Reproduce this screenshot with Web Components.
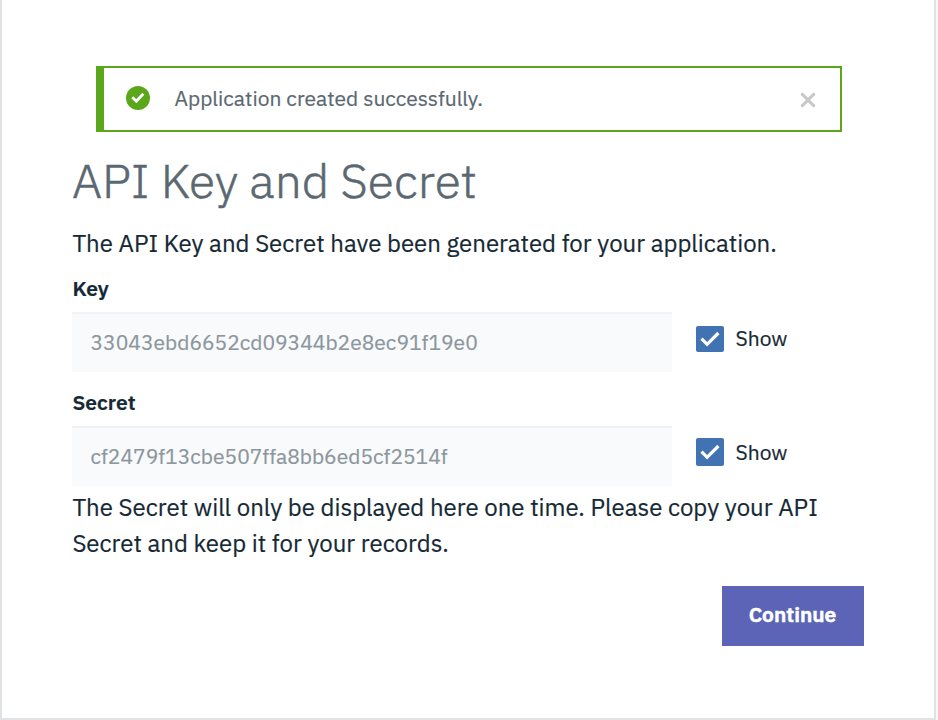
<!DOCTYPE html>
<html lang="en">
<head>
<meta charset="utf-8">
<title>API Key and Secret</title>
<style>
html,body{margin:0;height:100%;background:#f5f7fb}
body{font-family:"IBM Plex Sans",Roboto,"Noto Sans",sans-serif;color:#152935;-webkit-text-stroke:.2px currentColor}
</style>
</head>
<body>
<api-dialog>
  <success-notice slot="notice">Application created successfully.</success-notice>
  <span slot="title">API Key and Secret</span>
  <span slot="intro">The API Key and Secret have been generated for your application.</span>
  <secret-field slot="fields" label="Key" value="33043ebd6652cd09344b2e8ec91f19e0"></secret-field>
  <secret-field slot="fields" label="Secret" value="cf2479f13cbe507ffa8bb6ed5cf2514f" style="--box-height:28px;--check-top:12px;--text-shift:0px"></secret-field>
  <span slot="warning">The Secret will only be displayed here one time. Please copy your API</span>
  <span slot="warning-end">Secret and keep it for your records.</span>
  <primary-button slot="action">Continue</primary-button>
</api-dialog>
<script>
const define = (name, markup) => customElements.define(name, class extends HTMLElement {
  constructor() {
    super();
    this.attachShadow({mode: 'open'}).innerHTML = markup;
  }
  connectedCallback() {
    this.shadowRoot.querySelectorAll('[data-attr]').forEach(el => {
      el.textContent = this.getAttribute(el.dataset.attr);
    });
  }
});

define('success-notice', `
<style>
:host{display:flex;align-items:center;box-sizing:border-box;height:66px;border:2px solid #5aa71b;border-left-width:8px;padding:0 24px 0 22px;color:#5a6872;font-size:21px;line-height:30px}
.ok{width:24px;height:24px;margin:-2px 24.5px 0 0}
.text{flex:1;white-space:nowrap;margin-top:-2px}
button{display:block;border:0;padding:0;margin-top:2px;background:none;width:16px;height:16px}
svg{display:block}
</style>
<svg class="ok" viewBox="0 0 24 24"><circle cx="12" cy="12" r="12" fill="#5aa71b"/><path d="M6.3 11.3l4 4 7-7.6" fill="none" stroke="#fff" stroke-width="2.8"/></svg>
<span class="text"><slot></slot></span>
<button aria-label="Close"><svg width="16" height="16" viewBox="0 0 16 16"><path d="M1.4 1.4l13.2 13.2M14.6 1.4L1.4 14.6" stroke="#c8c8c8" stroke-width="3"/></svg></button>`);

define('check-box', `
<style>
:host{display:flex;align-items:center;gap:11.5px;height:28px;font-size:21px;line-height:28px}
.box{display:flex;justify-content:center;align-items:center;width:28px;height:var(--box-height,26px);border-radius:2px;background:#4173b3}
.text{margin-top:var(--text-shift,-2px)}
svg{display:block}
</style>
<span class="box"><svg width="20" height="16" viewBox="0 0 20 16"><path d="M1.5 7.7l5.6 5.6L18.4 2" fill="none" stroke="#fff" stroke-width="3.2"/></svg></span>
<span class="text"><slot></slot></span>`);

define('secret-field', `
<style>
:host{display:block;height:114px}
label{display:block;height:38px;padding-left:.5px;font-size:21px;line-height:28px;font-weight:600}
.row{display:flex;align-items:flex-start;gap:24px}
.value{box-sizing:border-box;width:600px;height:60px;padding-left:18.5px;background:#f9fafc;border-top:2px solid #f1f3f5;color:#8c969c;font-size:21px;line-height:57px}
check-box{margin-top:var(--check-top,13px)}
</style>
<label data-attr="label"></label>
<div class="row"><div class="value" data-attr="value"></div><check-box>Show</check-box></div>`);

define('primary-button', `
<style>
:host{display:block}
button{display:block;width:142px;height:60px;border:0;padding:0 1px 3px 0;background:#5b64b6;color:#fff;font:600 21px/57px "IBM Plex Sans",Roboto,"Noto Sans",sans-serif;-webkit-text-stroke:.5px #fff}
</style>
<button><slot></slot></button>`);

define('api-dialog', `
<style>
:host{display:block;box-sizing:border-box;width:936px;height:720px;border:2px solid #dfe3e6;border-top:0;background:#fff;padding:66px 70px 0}
.notice{padding:0 22px 0 24px}
h1{margin:16px 0 0;font-size:48px;line-height:64px;font-weight:300;color:#5a6872;-webkit-text-stroke:.5px #5a6872}
p{margin:0;padding-left:.4px;font-size:24px;line-height:36px;white-space:nowrap}
p span{display:block}
.intro{margin-top:13px}
.fields{margin-top:13px}
.warning{margin-top:-13px}
.warning span{width:max-content}
.actions{display:flex;justify-content:flex-end;margin-top:25px}
</style>
<div class="notice"><slot name="notice"></slot></div>
<h1><slot name="title"></slot></h1>
<p class="intro"><slot name="intro"></slot></p>
<div class="fields"><slot name="fields"></slot></div>
<p class="warning"><span><slot name="warning"></slot></span><span><slot name="warning-end"></slot></span></p>
<div class="actions"><slot name="action"></slot></div>`);
</script>
</body>
</html>
